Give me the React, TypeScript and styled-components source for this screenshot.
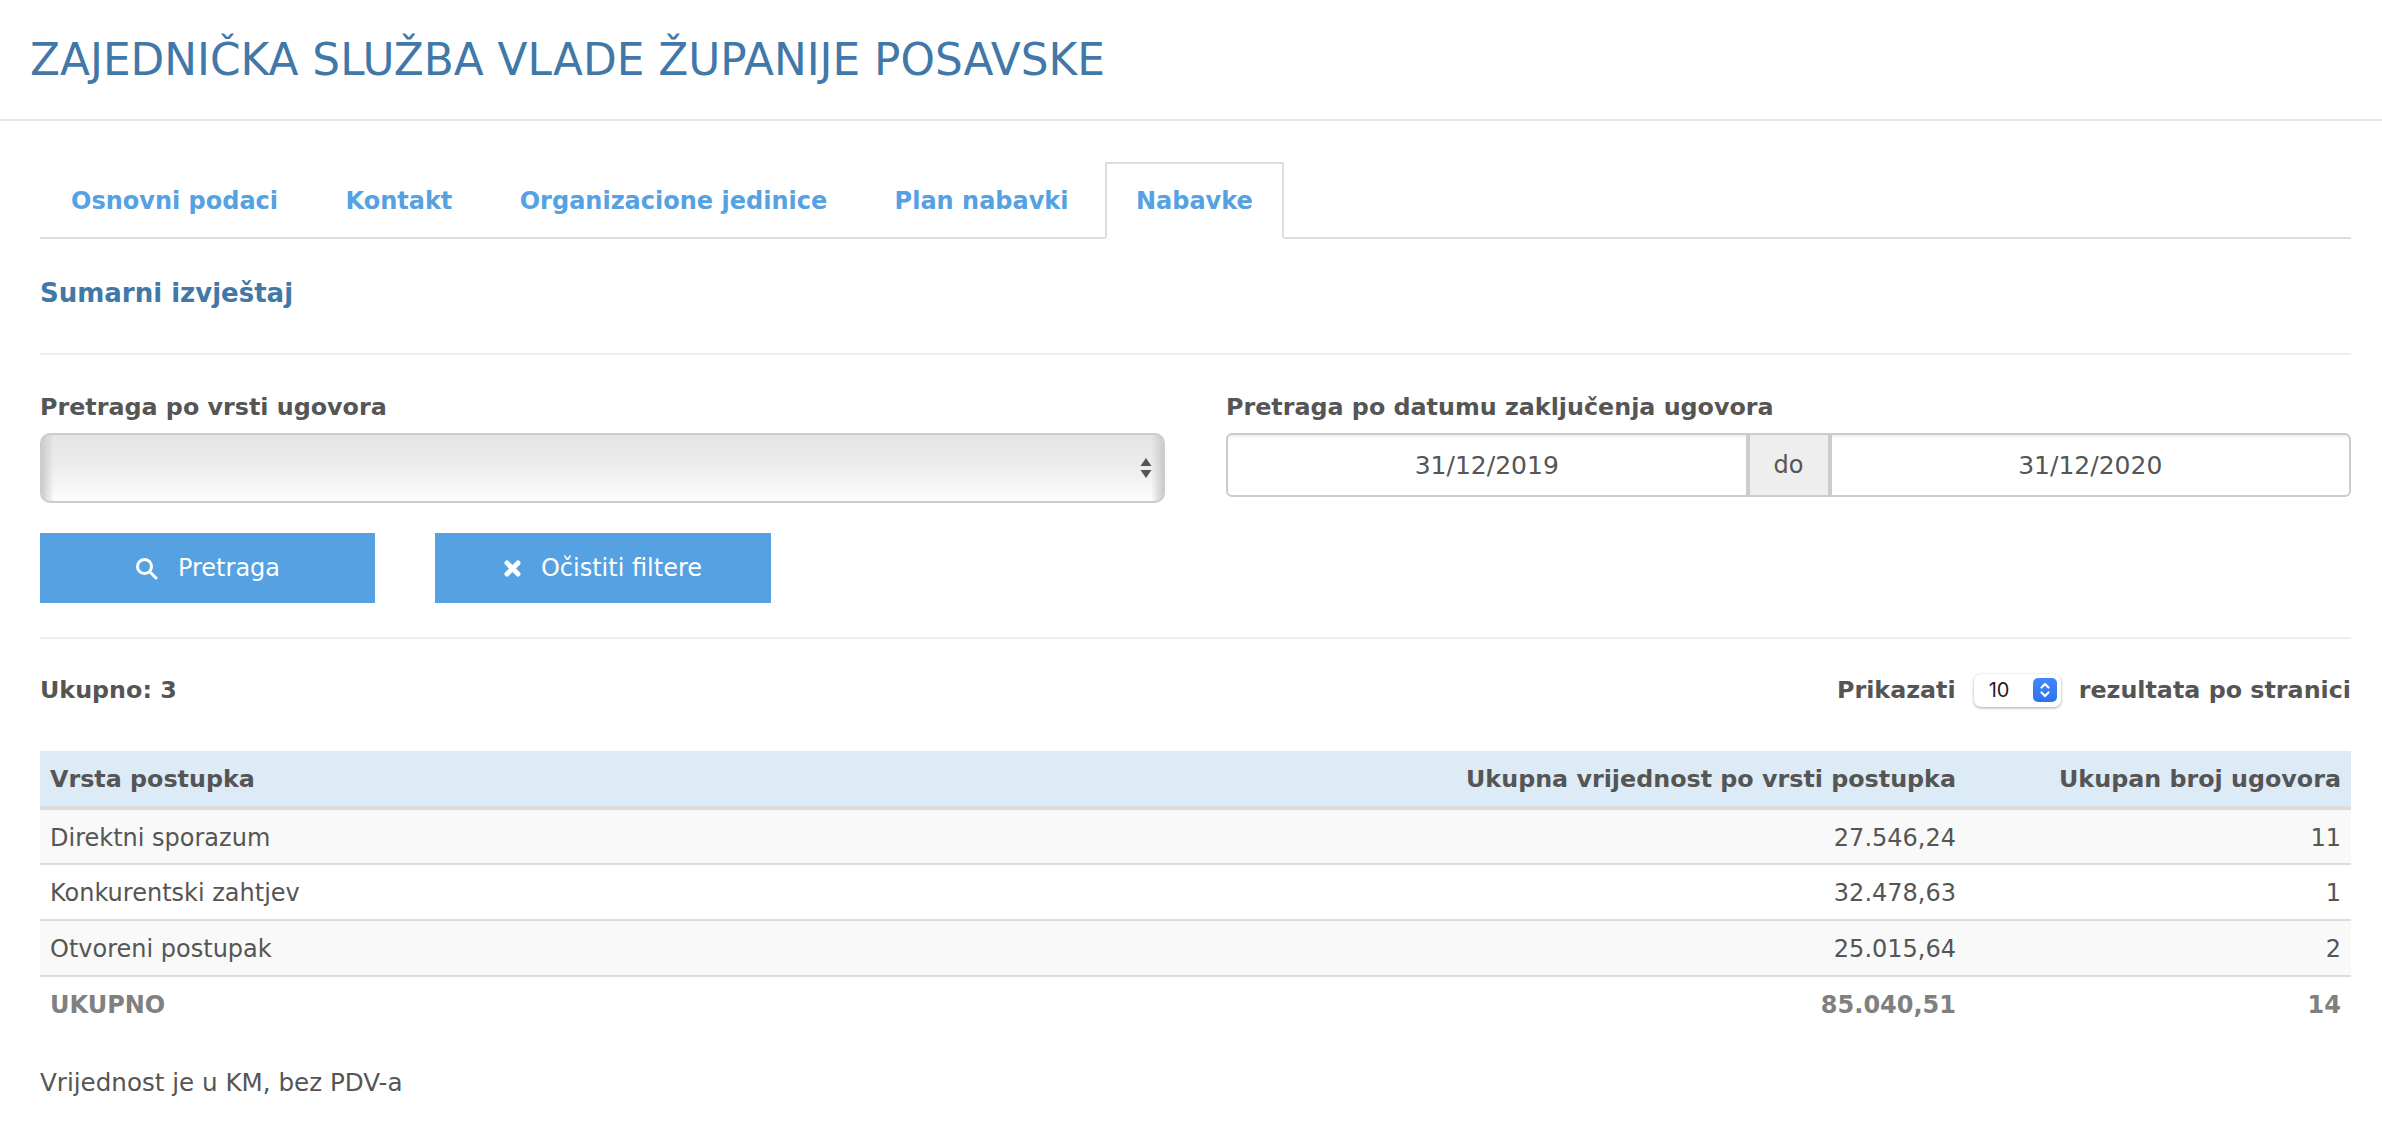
import { createGlobalStyle } from "styled-components";
import styled from "styled-components";

const GlobalStyle = createGlobalStyle`
  html, body {
    margin: 0;
    padding: 0;
    background: #fff;
    color: #555;
    font-family: "DejaVu Sans", Verdana, sans-serif;
  }
  * { box-sizing: border-box; }
`;

const Header = styled.header`
  height: 121px;
  padding: 0 30px;
  display: flex;
  align-items: center;
  border-bottom: 2px solid #e6e6e6;
`;

const PageTitle = styled.h1`
  margin: 0;
  font-size: 43.8px;
  font-weight: 400;
  color: #4178a8;
`;

const Content = styled.main`
  padding: 41px 31px 0 40px;
`;

const Tabs = styled.ul`
  list-style: none;
  margin: 0;
  padding: 0;
  height: 77px;
  display: flex;
  gap: 5.4px;
  border-bottom: 2px solid #ddd;
`;

const Tab = styled.li<{ $active?: boolean }>`
  height: 77px;
  padding: 0 29px;
  display: flex;
  align-items: center;
  font-size: 24px;
  font-weight: 700;
  color: #55a1e2;
  border: 2px solid ${(p) => (p.$active ? "#ddd" : "transparent")};
  border-bottom-color: ${(p) => (p.$active ? "#fff" : "transparent")};
  background: ${(p) => (p.$active ? "#fff" : "transparent")};
`;

const SectionTitle = styled.h2`
  margin: 0;
  padding-top: 38px;
  height: 116px;
  font-size: 26px;
  line-height: 32px;
  font-weight: 700;
  color: #4178a8;
  border-bottom: 2px solid #eee;
`;

const FilterRow = styled.div`
  display: grid;
  grid-template-columns: 1125px 1125px;
  justify-content: space-between;
  padding-top: 35px;
`;

const FieldLabel = styled.label`
  display: block;
  height: 43px;
  font-size: 23.8px;
  line-height: 34px;
  font-weight: 700;
  color: #555;
`;

const SelectBox = styled.div`
  height: 70px;
  display: flex;
  align-items: center;
  justify-content: flex-end;
  padding-right: 11px;
  border: 2px solid #ccc;
  border-radius: 10px;
  background:
    linear-gradient(90deg, #ccc 0, rgba(255, 255, 255, 0) 12px, rgba(255, 255, 255, 0) calc(100% - 12px), #ccc 100%),
    linear-gradient(180deg, #e5e5e5 0%, #ececec 45%, #fcfcfc 100%);
`;

const DateGroup = styled.div`
  height: 64px;
  display: flex;
  border: 2px solid #ccc;
  border-radius: 6px;
  box-shadow: inset 0 2px 2px rgba(0, 0, 0, 0.06);
  overflow: hidden;
`;

const DateInput = styled.input`
  flex: 1;
  min-width: 0;
  border: 0;
  outline: 0;
  background: transparent;
  text-align: center;
  font-family: inherit;
  font-size: 25px;
  color: #555;
`;

const Addon = styled.span`
  width: 86px;
  display: flex;
  align-items: center;
  justify-content: center;
  font-size: 24px;
  color: #555;
  background: #eee;
  border-left: 4px solid #ccc;
  border-right: 4px solid #ccc;
`;

const ButtonRow = styled.div`
  display: flex;
  gap: 60px;
  padding: 30px 0 34px;
  border-bottom: 2px solid #eee;
`;

const Button = styled.button<{ $width: number }>`
  width: ${(p) => p.$width}px;
  height: 70px;
  border: 0;
  display: flex;
  align-items: center;
  justify-content: center;
  gap: 20px;
  background: #55a1e2;
  color: #fff;
  font-family: inherit;
  font-size: 24px;
`;

const SummaryRow = styled.div`
  height: 112px;
  padding-bottom: 10px;
  display: flex;
  align-items: center;
  justify-content: space-between;
  font-size: 23.8px;
  font-weight: 700;
  color: #555;
`;

const PageSize = styled.div`
  display: flex;
  align-items: center;
  gap: 18px;
`;

const MiniSelect = styled.div`
  width: 87px;
  height: 33px;
  padding: 0 4px 0 15px;
  display: flex;
  align-items: center;
  justify-content: space-between;
  border-radius: 7px;
  background: #fff;
  box-shadow: 0 1px 3px rgba(0, 0, 0, 0.35);
  font-size: 20px;
  font-weight: 400;
  color: #222;
  font-family: "Inter", sans-serif;
`;

const MiniArrow = styled.span`
  width: 24px;
  height: 24px;
  display: flex;
  align-items: center;
  justify-content: center;
  border-radius: 5px;
  background: linear-gradient(180deg, #4187fb, #2f72ee);
`;

const Table = styled.table`
  width: 100%;
  border-collapse: collapse;
  table-layout: fixed;
  font-size: 23.8px;
`;

const HeadCell = styled.th<{ $right?: boolean; $width?: number }>`
  height: 57px;
  padding: 0 10px;
  text-align: ${(p) => (p.$right ? "right" : "left")};
  width: ${(p) => (p.$width ? `${p.$width}px` : "auto")};
  font-weight: 700;
  color: #555;
  background: #ddebf6;
  border-bottom: 4px solid #ddd;
`;

const Row = styled.tr<{ $odd?: boolean }>`
  background: ${(p) => (p.$odd ? "#f9f9f9" : "#fff")};
`;

const Cell = styled.td<{ $right?: boolean }>`
  height: 56px;
  padding: 2px 10px 0;
  text-align: ${(p) => (p.$right ? "right" : "left")};
  font-size: 24px;
  color: #555;
  border-bottom: 2px solid #ddd;
`;

const TotalCell = styled.td<{ $right?: boolean }>`
  height: 56px;
  padding: 0 10px;
  text-align: ${(p) => (p.$right ? "right" : "left")};
  font-size: 24px;
  font-weight: 700;
  color: #808080;
`;

const Note = styled.p`
  margin: 35px 0 0;
  font-size: 24.6px;
  line-height: 32px;
  color: #555;
`;

const rows = [
  { name: "Direktni sporazum", value: "27.546,24", count: 11 },
  { name: "Konkurentski zahtjev", value: "32.478,63", count: 1 },
  { name: "Otvoreni postupak", value: "25.015,64", count: 2 },
];

const tabs = ["Osnovni podaci", "Kontakt", "Organizacione jedinice", "Plan nabavki", "Nabavke"];

export default function App() {
  return (
    <>
      <GlobalStyle />
      <Header>
        <PageTitle>ZAJEDNIČKA SLUŽBA VLADE ŽUPANIJE POSAVSKE</PageTitle>
      </Header>
      <Content>
        <Tabs>
          {tabs.map((t) => (
            <Tab key={t} $active={t === "Nabavke"}>{t}</Tab>
          ))}
        </Tabs>
        <SectionTitle>Sumarni izvještaj</SectionTitle>
        <FilterRow>
          <div>
            <FieldLabel>Pretraga po vrsti ugovora</FieldLabel>
            <SelectBox>
              <svg width="12" height="24" viewBox="0 0 12 24">
                <path d="M6 2 L11.5 10 H0.5 Z M6 22 L0.5 14 H11.5 Z" fill="#555" />
              </svg>
            </SelectBox>
          </div>
          <div>
            <FieldLabel>Pretraga po datumu zaključenja ugovora</FieldLabel>
            <DateGroup>
              <DateInput readOnly value="31/12/2019" />
              <Addon>do</Addon>
              <DateInput readOnly value="31/12/2020" />
            </DateGroup>
          </div>
        </FilterRow>
        <ButtonRow>
          <Button $width={335}>
            <svg width="23" height="23" viewBox="0 0 23 23" fill="none" stroke="#fff" strokeWidth="3" strokeLinecap="round">
              <circle cx="9.5" cy="9.5" r="7" />
              <path d="M15 15 L21 21" />
            </svg>
            Pretraga
          </Button>
          <Button $width={336}>
            <svg width="17" height="17" viewBox="0 0 17 17" fill="none" stroke="#fff" strokeWidth="5" strokeLinecap="round">
              <path d="M3 3 L14 14 M14 3 L3 14" />
            </svg>
            Očistiti filtere
          </Button>
        </ButtonRow>
        <SummaryRow>
          <span>Ukupno: 3</span>
          <PageSize>
            <span>Prikazati</span>
            <MiniSelect>
              10
              <MiniArrow>
                <svg width="12" height="18" viewBox="0 0 12 18" fill="none" stroke="#fff" strokeWidth="2.2" strokeLinecap="round" strokeLinejoin="round">
                  <path d="M2.5 6.5 L6 3 L9.5 6.5 M2.5 11.5 L6 15 L9.5 11.5" />
                </svg>
              </MiniArrow>
            </MiniSelect>
            <span>rezultata po stranici</span>
          </PageSize>
        </SummaryRow>
        <Table>
          <thead>
            <tr>
              <HeadCell>Vrsta postupka</HeadCell>
              <HeadCell $right $width={700}>Ukupna vrijednost po vrsti postupka</HeadCell>
              <HeadCell $right $width={385}>Ukupan broj ugovora</HeadCell>
            </tr>
          </thead>
          <tbody>
            {rows.map((r, i) => (
              <Row key={r.name} $odd={i % 2 === 0}>
                <Cell>{r.name}</Cell>
                <Cell $right>{r.value}</Cell>
                <Cell $right>{r.count}</Cell>
              </Row>
            ))}
            <tr>
              <TotalCell>UKUPNO</TotalCell>
              <TotalCell $right>85.040,51</TotalCell>
              <TotalCell $right>14</TotalCell>
            </tr>
          </tbody>
        </Table>
        <Note>Vrijednost je u KM, bez PDV-a</Note>
      </Content>
    </>
  );
}
